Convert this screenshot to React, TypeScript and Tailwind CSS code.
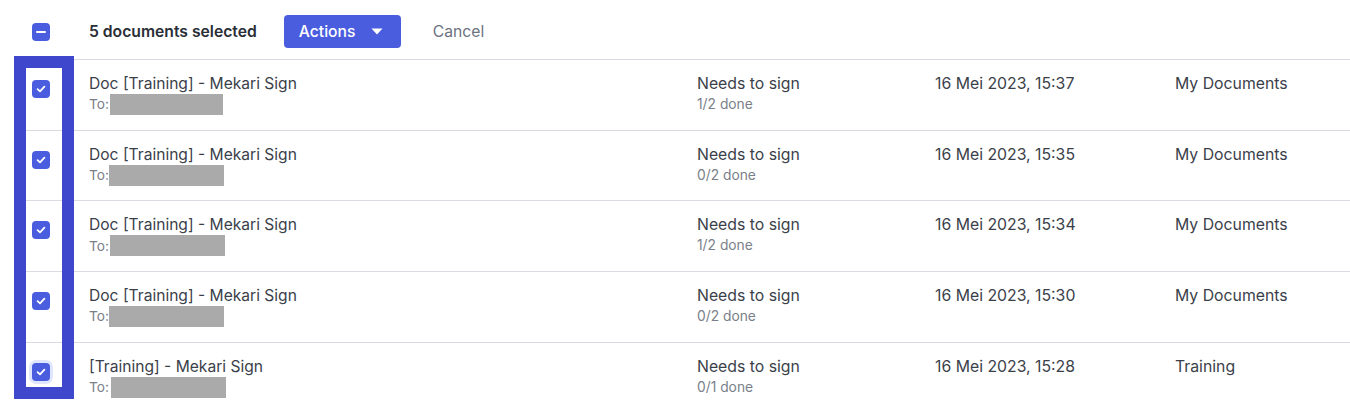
import React from 'react'

type Row = { title: string; done: string; date: string; folder: string; redact: string }

const ROWS: Row[] = [
  { title: 'Doc [Training] - Mekari Sign', done: '1/2 done', date: '16 Mei 2023, 15:37', folder: 'My Documents', redact: 'ml-[1px] w-[113px]' },
  { title: 'Doc [Training] - Mekari Sign', done: '0/2 done', date: '16 Mei 2023, 15:35', folder: 'My Documents', redact: 'ml-0 w-[115px]' },
  { title: 'Doc [Training] - Mekari Sign', done: '1/2 done', date: '16 Mei 2023, 15:34', folder: 'My Documents', redact: 'ml-[1px] w-[115px]' },
  { title: 'Doc [Training] - Mekari Sign', done: '0/2 done', date: '16 Mei 2023, 15:30', folder: 'My Documents', redact: 'ml-0 w-[115px]' },
  { title: '[Training] - Mekari Sign', done: '0/1 done', date: '16 Mei 2023, 15:28', folder: 'Training', redact: 'ml-[2px] w-[115px]' },
]

function Check({ focus }: { focus?: boolean }) {
  return (
    <div className={`w-[18px] h-[18px] rounded-[4px] bg-[#4a5ddf] flex items-center justify-center flex-shrink-0 ${focus ? 'ring-[3px] ring-[#dfe6fd]' : ''}`}>
      <svg width="12" height="12" viewBox="0 0 12 12" fill="none">
        <path d="M2.6 6.2 L5 8.4 L9.4 3.6" stroke="white" strokeWidth="1.8" strokeLinecap="round" strokeLinejoin="round" />
      </svg>
    </div>
  )
}

export default function App() {
  return (
    <div className="relative w-[1350px] h-[406px] bg-white overflow-hidden text-[#3b3f4a]" style={{ fontFamily: 'Inter, "Noto Sans", sans-serif' }}>
      <div className="flex items-center h-[59px] pt-[4px] pl-[32px]">
        <div className="w-[18px] h-[18px] rounded-[4px] bg-[#4a5ddf] flex items-center justify-center">
          <div className="w-[10px] h-[2px] bg-white rounded-full" />
        </div>
        <span className="ml-[39px] text-[15.7px] font-semibold text-[#2a2e37]">5 documents selected</span>
        <button className="ml-[27px] w-[117px] h-[33px] rounded-[4px] bg-[#4a5ddf] text-white text-[15.7px] font-medium flex items-center pl-[15px]">
          Actions
          <svg className="ml-[16px]" width="12" height="7" viewBox="0 0 12 7">
            <path d="M0.5 0.5 H11.5 L6 6.5 Z" fill="white" />
          </svg>
        </button>
        <span className="ml-[32px] text-[15.7px] text-[#6b7280]">Cancel</span>
      </div>

      <div className="ml-[16px]">
        {ROWS.map((r, i) => (
          <div key={i} className="flex h-[70.7px] border-t border-[#d8dbe1]">
            <div className="w-[73px] pl-[16px] pt-[20px]">
              <Check focus={i === ROWS.length - 1} />
            </div>
            <div className="w-[608px] pt-[13px]">
              <p className="text-[15.6px] leading-[21px]">{r.title}</p>
              <div className="flex items-center h-[21px]">
                <span className="text-[13.7px] text-[#7a7f89]">To:</span>
                <span className={`h-[21px] bg-[#aaaaaa] ${r.redact}`} />
              </div>
            </div>
            <div className="w-[238px] pt-[13px]">
              <p className="text-[15.8px] leading-[21px]">Needs to sign</p>
              <p className="text-[13.8px] leading-[21px] text-[#7a7f89]">{r.done}</p>
            </div>
            <div className="w-[240px] pt-[13px]">
              <p className="text-[15.8px] leading-[21px]">{r.date}</p>
            </div>
            <div className="pt-[13px]">
              <p className="text-[15.8px] leading-[21px]">{r.folder}</p>
            </div>
          </div>
        ))}
      </div>

      {/* highlight annotation over the checkbox column */}
      <div className="absolute left-[14px] top-[56px] w-[60px] h-[343px] border-[12px] border-[#3f47cd] pointer-events-none" />
    </div>
  )
}
